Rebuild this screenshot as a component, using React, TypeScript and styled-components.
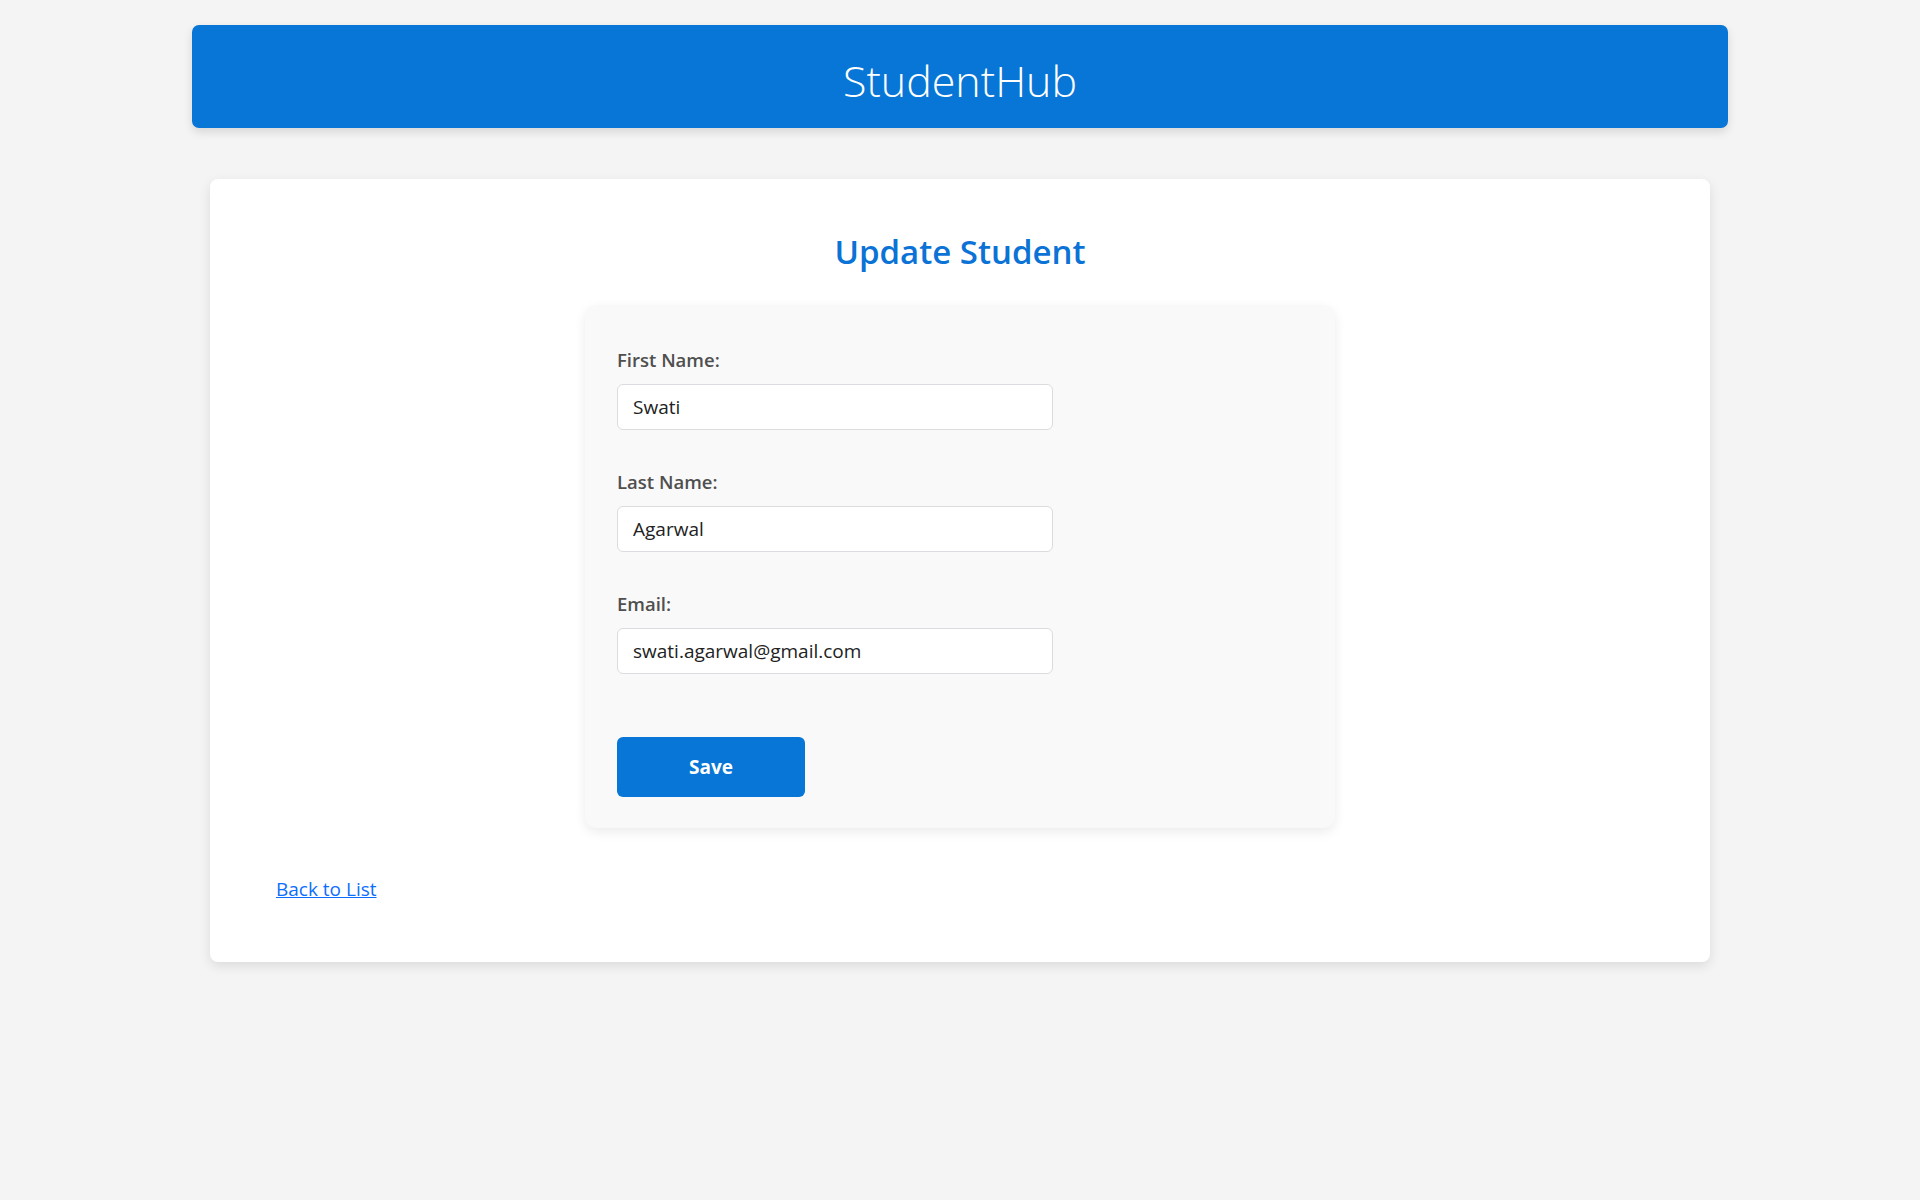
import React from "react";
import styled, { createGlobalStyle } from "styled-components";

const Global = createGlobalStyle`
  html, body { margin: 0; padding: 0; }
  body {
    background: #f4f4f4;
    font-family: "Open Sans", "Noto Sans", sans-serif;
  }
  * { box-sizing: border-box; }
`;

const Page = styled.div`
  display: flex;
  flex-direction: column;
  align-items: center;
  padding-top: 25px;
  min-height: 1200px;
`;

const Header = styled.header`
  width: 1536px;
  height: 103px;
  padding-top: 8px;
  background: #0776d6;
  border-radius: 7px;
  box-shadow: 0 4px 10px rgba(0, 0, 0, 0.12);
  display: flex;
  align-items: center;
  justify-content: center;
`;

const Brand = styled.h1`
  margin: 0;
  color: #ffffff;
  font-weight: 300;
  font-size: 43px;
  letter-spacing: 0;
`;

const Card = styled.main`
  width: 1500px;
  margin-top: 51px;
  background: #ffffff;
  border-radius: 8px;
  box-shadow: 0 4px 12px rgba(0, 0, 0, 0.1);
  padding: 50px 66px 60px;
  display: flex;
  flex-direction: column;
`;

const Title = styled.h2`
  margin: 0 0 31px;
  text-align: center;
  color: #0b72d6;
  font-size: 33px;
  font-weight: 600;
`;

const FormBox = styled.form`
  width: 750px;
  align-self: center;
  background: #f9f9f9;
  border-radius: 12px;
  box-shadow: 0 4px 12px rgba(0, 0, 0, 0.08);
  padding: 42px 32px 31px;
  display: flex;
  flex-direction: column;
`;

const Group = styled.div`
  display: flex;
  flex-direction: column;
  margin-bottom: 39px;
`;

const Label = styled.label`
  color: #4f4f4f;
  font-size: 18.5px;
  font-weight: 600;
  margin-bottom: 12px;
`;

const Input = styled.input`
  width: 436px;
  height: 46px;
  border: 1px solid #dcdce0;
  border-radius: 6px;
  background: #ffffff;
  padding: 0 15px;
  font-family: inherit;
  font-size: 19px;
  color: #222;
  outline: none;
`;

const SaveButton = styled.button`
  margin-top: 24px;
  width: 188px;
  height: 60px;
  border: none;
  border-radius: 6px;
  background: #0776d6;
  color: #ffffff;
  font-family: inherit;
  font-size: 19px;
  font-weight: 700;
  cursor: pointer;
`;

const BackLink = styled.a`
  margin-top: 48px;
  align-self: flex-start;
  color: #0d6efd;
  font-size: 19px;
  text-decoration: underline;
`;

export default function App() {
  return (
    <>
      <Global />
      <Page>
        <Header>
          <Brand>StudentHub</Brand>
        </Header>
        <Card>
          <Title>Update Student</Title>
          <FormBox onSubmit={(e) => e.preventDefault()}>
            <Group>
              <Label htmlFor="fn">First Name:</Label>
              <Input id="fn" defaultValue="Swati" />
            </Group>
            <Group>
              <Label htmlFor="ln">Last Name:</Label>
              <Input id="ln" defaultValue="Agarwal" />
            </Group>
            <Group>
              <Label htmlFor="em">Email:</Label>
              <Input id="em" defaultValue="swati.agarwal@gmail.com" />
            </Group>
            <SaveButton type="submit">Save</SaveButton>
          </FormBox>
          <BackLink href="#">Back to List</BackLink>
        </Card>
      </Page>
    </>
  );
}
